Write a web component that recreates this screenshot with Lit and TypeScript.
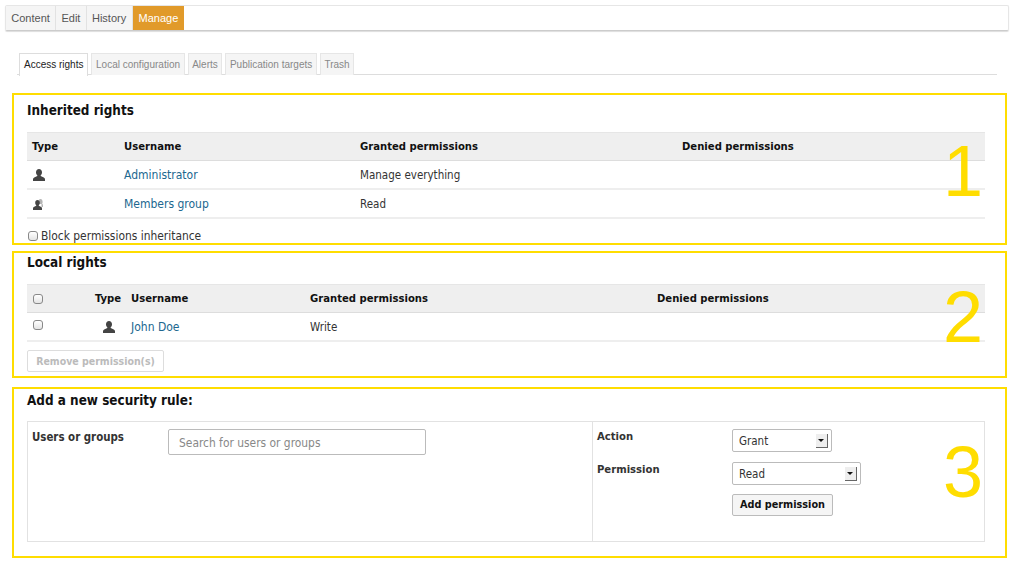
import { LitElement, css, html, nothing } from "lit";
import { customElement } from "lit/decorators.js";

const person = html`<svg class="icon" viewBox="0 0 12 12" width="12" height="12">
  <path fill="#444" d="M6 0C4.200 0 3 1.300 3 3.200c0 1.300.5 2.400 1.300 3v.7L1.200 8.500C.4 8.900 0 9.500 0 10.300V12h12v-1.700c0-.8-.4-1.400-1.200-1.800L7.700 6.900v-.7C8.500 5.600 9 4.500 9 3.200 9 1.300 7.800 0 6 0z"/>
</svg>`;

const group = html`<svg class="icon" viewBox="0 0 12 12" width="12" height="12">
  <path fill="#b4b4b4" d="M7.500 1C6.400 1 5.600 1.800 5.600 3v3h2.900v3H10V6.600L9 6c.4-.6.600-1.300.6-2.100C9.600 2.100 8.800 1 7.500 1z"/>
  <path fill="#444" d="M4.500 2C3.100 2 2.200 3.100 2.200 4.700c0 1 .4 1.900 1 2.400v.6L.8 9C.3 9.300 0 9.800 0 10.400V12h9v-1.600c0-.6-.3-1.100-.8-1.400L5.800 7.700v-.6c.6-.5 1-1.400 1-2.400C6.800 3.100 5.900 2 4.500 2z"/>
</svg>`;

@customElement("app-root")
export class AppRoot extends LitElement {
  static styles = css`
    :host {
      display: block;
      height: 565px;
      overflow: hidden;
      background: #fff;
      font-family: "DejaVu Sans Condensed", "DejaVu Sans", sans-serif;
      font-size: 11.5px;
      color: #333;
    }

    .nav {
      margin: 5px 6px 0 5px;
      height: 26px;
      display: flex;
      box-sizing: border-box;
      border: 1px solid #e6e6e6;
      border-bottom-color: #ccc;
      border-radius: 2px;
      box-shadow: 0 1px 1px #ddd;
      font-family: "Liberation Sans", sans-serif;
      font-size: 11px;
    }
    .nav span {
      padding: 0 5.300px;
      line-height: 24px;
      background: #f5f5f5;
      border-right: 1px solid #e2e2e2;
      color: #555;
    }
    .nav span.on {
      background: #e19a2a;
      color: #fff;
      border-right: none;
      padding: 0 6px;
    }

    .tabs {
      margin: 22px 18px 0 17px;
      height: 22px;
      display: flex;
      gap: 3px;
      padding-left: 2px;
      box-sizing: border-box;
      border-bottom: 1px solid #ddd;
      font-family: "Liberation Sans", sans-serif;
      font-size: 10px;
    }
    .tabs span {
      height: 21px;
      line-height: 21px;
      padding: 0 3.600px;
      background: #f5f5f5;
      border: 1px solid #e6e6e6;
      border-bottom: none;
      color: #888;
    }
    .tabs span.on {
      height: 22px;
      padding: 0 4px;
      background: #fff;
      border-color: #ddd;
      color: #222;
    }

    .box {
      position: relative;
      margin: 0 8px 0 12px;
      border: 2px solid #ffdd00;
      box-sizing: border-box;
      padding: 0 20px 0 13px;
    }
    .one { margin-top: 18px; height: 152px; padding-top: 7px; }
    .two { margin-top: 6px; height: 127px; padding-top: 1px; }
    .three { margin-top: 9px; height: 171px; padding-top: 3px; }

    .num {
      position: absolute;
      right: 22px;
      font-family: "Liberation Sans", sans-serif;
      font-size: 72px;
      line-height: 72px;
      color: #ffdd00;
    }
    .one .num { top: 40px; }
    .two .num { top: 28px; }
    .three .num { top: 47px; }

    h2 {
      margin: 0;
      font-size: 13.400px;
      line-height: 18px;
      font-weight: bold;
      color: #111;
    }

    table {
      width: 100%;
      border-collapse: collapse;
      table-layout: fixed;
    }
    .one table { margin-top: 12px; }
    .two table { margin-top: 12px; }
    th {
      height: 27px;
      padding: 0 4px;
      text-align: left;
      font-size: 11.200px;
      color: #111;
      background: #efefef;
      border-top: 1px solid #e6e6e6;
      border-bottom: 1px solid #ddd;
    }
    .one th:first-child { padding-left: 5px; }
    td {
      height: 28.500px;
      padding: 1px 4px 0;
      box-sizing: border-box;
      border-bottom: 2px solid #eee;
    }
    a {
      color: #20678f;
      font-size: 12px;
      text-decoration: none;
    }
    .icon { display: block; margin-left: 2px; }
    .center .icon { margin: 0 auto; }

    .check {
      appearance: none;
      display: block;
      width: 10px;
      height: 10px;
      margin: 0 0 0 2px;
      box-sizing: border-box;
      border: 1px solid #888;
      border-radius: 3px;
      background: linear-gradient(#fff, #e4e4e4);
    }
    th .check { margin-top: 1px; }
    td .check { margin-bottom: 4px; }
    .block {
      display: flex;
      align-items: center;
      gap: 3px;
      margin: 10px 0 0 -1px;
      font-size: 11.900px;
      line-height: 14px;
      color: #333;
    }

    button {
      display: block;
      box-sizing: border-box;
      font: bold 10.800px "DejaVu Sans Condensed", "DejaVu Sans", sans-serif;
      border-radius: 2px;
      padding: 0 0 1px;
      white-space: nowrap;
    }
    .remove {
      margin-top: 8px;
      width: 137px;
      height: 22px;
      background: #fff;
      border: 1px solid #ddd;
      color: #bbb;
      font-size: 10.500px;
    }

    .rule {
      margin-top: 11px;
      height: 121px;
      box-sizing: border-box;
      border: 1px solid #e2e2e2;
      display: grid;
      grid-template-columns: 565px 1fr;
    }
    .users {
      display: flex;
      padding: 7px 0 0 4px;
      border-right: 1px solid #e2e2e2;
    }
    .users label { width: 136px; font-size: 11.400px; padding-top: 1px; }
    label {
      font-weight: bold;
      font-size: 11.200px;
      color: #333;
      line-height: 14px;
      padding-top: 1px;
    }
    .search {
      width: 258px;
      height: 26px;
      box-sizing: border-box;
      border: 1px solid #bbb;
      border-radius: 2px;
      padding: 1px 10px 0;
      font: 11.900px "DejaVu Sans Condensed", "DejaVu Sans", sans-serif;
      color: #333;
      outline: none;
    }
    .search::placeholder { color: #888; opacity: 1; }

    .perm {
      display: grid;
      grid-template-columns: 135px 1fr;
      grid-auto-rows: min-content;
      row-gap: 10px;
      padding: 7px 0 0 4px;
    }
    .select {
      position: relative;
      height: 23px;
      box-sizing: border-box;
      border: 1px solid #bbb;
      border-radius: 2px;
      padding-left: 6px;
      line-height: 23px;
      color: #333;
    }
    .select::after {
      content: "";
      position: absolute;
      top: 4px;
      right: 3px;
      width: 12px;
      height: 14px;
      background: #eee;
      border-right: 1px solid #666;
      border-bottom: 1px solid #666;
      box-sizing: border-box;
    }
    .select::before {
      content: "";
      position: absolute;
      z-index: 1;
      top: 9px;
      right: 7px;
      border: 3px solid transparent;
      border-top: 3px solid #111;
      border-bottom: none;
    }
    .grant { width: 100px; }
    .read { width: 129px; }
    .add {
      grid-column: 2;
      width: 101px;
      height: 22px;
      margin-top: -1px;
      background: #f5f5f5;
      border: 1px solid #bbb;
      color: #111;
    }
  `;

  render() {
    return html`
      <div class="nav">
        <span>Content</span><span>Edit</span><span>History</span><span class="on">Manage</span>
      </div>
      <div class="tabs">
        <span class="on">Access rights</span>
        <span>Local configuration</span>
        <span>Alerts</span>
        <span>Publication targets</span>
        <span>Trash</span>
      </div>

      <section class="box one">
        <h2>Inherited rights</h2>
        <table>
          <colgroup>
            <col style="width:93px" /><col style="width:236px" /><col style="width:322px" /><col />
          </colgroup>
          <tr><th>Type</th><th>Username</th><th>Granted permissions</th><th>Denied permissions</th></tr>
          ${this.row(person, "Administrator", "Manage everything")}
          ${this.row(group, "Members group", "Read")}
        </table>
        <div class="block"><input class="check" type="checkbox" />Block permissions inheritance</div>
        <div class="num">1</div>
      </section>

      <section class="box two">
        <h2>Local rights</h2>
        <table>
          <colgroup>
            <col style="width:64px" /><col style="width:36px" /><col style="width:179px" /><col style="width:347px" /><col />
          </colgroup>
          <tr>
            <th><input class="check" type="checkbox" /></th>
            <th>Type</th><th>Username</th><th>Granted permissions</th><th>Denied permissions</th>
          </tr>
          <tr>
            <td><input class="check" type="checkbox" /></td>
            <td class="center">${person}</td>
            <td><a href="#">John Doe</a></td>
            <td>Write</td>
            <td></td>
          </tr>
        </table>
        <button class="remove" disabled>Remove permission(s)</button>
        <div class="num">2</div>
      </section>

      <section class="box three">
        <h2>Add a new security rule:</h2>
        <div class="rule">
          <div class="users">
            <label>Users or groups</label>
            <input class="search" placeholder="Search for users or groups" />
          </div>
          <div class="perm">
            <label>Action</label>
            <div class="select grant">Grant</div>
            <label>Permission</label>
            <div class="select read">Read</div>
            <button class="add">Add permission</button>
          </div>
        </div>
        <div class="num">3</div>
      </section>
    `;
  }

  row(icon: unknown, name: string, granted: string) {
    return html`<tr>
      <td>${icon}</td>
      <td><a href="#">${name}</a></td>
      <td>${granted}</td>
      <td>${nothing}</td>
    </tr>`;
  }
}
